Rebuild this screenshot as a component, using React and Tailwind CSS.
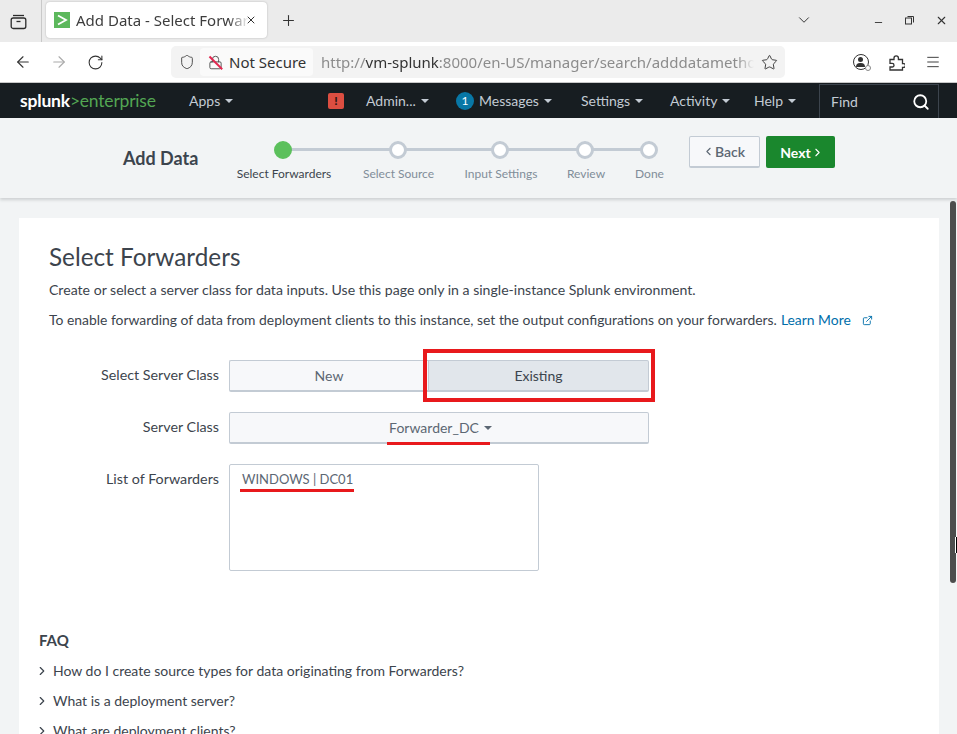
import { ArrowLeft, ArrowRight, RotateCw, Shield, Star, Menu, Plus, X, ChevronDown, ChevronLeft, ChevronRight, Search, Minus, ExternalLink, Lock } from "lucide-react"

const uiFont = "font-['Noto_Sans',sans-serif]"
const pageFont = "font-['Lato','Open_Sans',sans-serif]"

const steps = [
  { label: "Select Forwarders", width: "w-[96px]", active: true },
  { label: "Select Source", width: "w-[73px]" },
  { label: "Input Settings", width: "w-[72px]" },
  { label: "Review", width: "w-[38px]" },
  { label: "Done", width: "w-[29px]" },
]

const faqs = [
  "How do I create source types for data originating from Forwarders?",
  "What is a deployment server?",
  "What are deployment clients?",
]

function Caret() {
  return <span className="ml-[5px] inline-block h-0 w-0 border-x-[4px] border-t-[4px] border-x-transparent border-t-current" />
}

function TabBar() {
  return (
    <div className={`flex h-[42px] shrink-0 items-start bg-[#ebebeb] ${uiFont}`}>
      <div className="flex h-[42px] w-[42px] items-center justify-center border-r border-[#c9c9c9] pr-[4px]">
        <svg width="17" height="17" viewBox="0 0 17 17" fill="none" stroke="#2b2b2b" strokeWidth="1.3">
          <path d="M3 2.5h11" />
          <rect x="1.2" y="5" width="14.6" height="10.5" rx="2" />
          <path d="M6.5 8.5h4" />
        </svg>
      </div>
      <div className="ml-[4px] mt-[2px] flex h-[36px] w-[221px] items-center rounded-[4px] bg-white pl-[8px] shadow-[0_0_2px_rgba(0,0,0,0.25)]">
        <div className="flex h-[16px] w-[16px] items-center justify-center bg-[#5cb85c]">
          <svg width="12" height="12" viewBox="0 0 12 12" fill="none" stroke="white" strokeWidth="1.8">
            <path d="M2 1.5 10 6 2 10.5" />
          </svg>
        </div>
        <span className="ml-[6px] w-[173px] overflow-hidden whitespace-nowrap text-[15px] text-[#3d3d3d] [mask-image:linear-gradient(to_right,black_88%,transparent)]">
          Add Data - Select Forwarders
        </span>
        <X size={12} className="-ml-[4px] text-[#333]" />
      </div>
      <Plus size={17} strokeWidth={1.5} className="ml-[13px] mt-[12px] text-[#333]" />
      <div className="flex-1" />
      <ChevronDown size={18} strokeWidth={1.3} className="mr-[60px] mt-[11px] text-[#333]" />
      <Minus size={11} className="mr-[21px] mt-[17px] text-[#333]" />
      <svg width="9" height="9" viewBox="0 0 9 9" fill="none" stroke="#333" className="mr-[21px] mt-[16px]">
        <rect x="0.5" y="2" width="6" height="6" />
        <path d="M2.5 0.5h6v6" />
      </svg>
      <X size={13} className="mr-[9px] mt-[14px] text-[#333]" />
    </div>
  )
}

function Toolbar() {
  return (
    <div className={`flex h-[41px] shrink-0 items-center border-b border-[#c8c8c8] bg-white ${uiFont}`}>
      <ArrowLeft size={18} strokeWidth={1.5} className="ml-[14px] text-[#333]" />
      <ArrowRight size={18} strokeWidth={1.5} className="ml-[18px] text-[#aaa]" />
      <RotateCw size={17} strokeWidth={1.5} className="ml-[19px] text-[#333]" />
      <div className="ml-[67px] flex h-[32px] w-[614px] items-center rounded-[5px] bg-[#f3f3f3]">
        <Shield size={16} strokeWidth={1.4} className="ml-[8px] text-[#444]" />
        <div className="ml-[5px] flex h-[28px] w-[113px] items-center rounded-[4px] bg-[#fafafa] pl-[8px]">
          <div className="relative">
            <Lock size={15} strokeWidth={1.4} className="text-[#444]" />
            <span className="absolute left-[-1px] top-[7px] h-[1.5px] w-[18px] rotate-45 bg-[#e22850]" />
          </div>
          <span className="ml-[6px] whitespace-nowrap text-[15px] text-[#333]">Not Secure</span>
        </div>
        <span className="ml-[8px] w-[433px] overflow-hidden whitespace-nowrap text-[15px] text-[#8c8c8c] [mask-image:linear-gradient(to_right,black_96%,transparent)]">
          http://<span className="text-[#333]">vm-splunk</span>:8000/en-US/manager/search/adddatamethods
        </span>
        <Star size={17} strokeWidth={1.3} className="ml-[7px] text-[#333]" />
      </div>
      <div className="relative ml-[68px] h-[16px] w-[16px] rounded-full border-[1.5px] border-[#333]">
        <span className="absolute left-[4px] top-[2px] h-[5px] w-[5px] rounded-full bg-[#333]" />
        <span className="absolute left-[2px] top-[8px] h-[4px] w-[9px] rounded-t-full bg-[#333]" />
        <span className="absolute left-[11px] top-[10px] h-[6px] w-[6px] rounded-full border border-[#888] bg-white" />
      </div>
      <svg width="16" height="17" viewBox="0 0 16 17" fill="none" stroke="#333" strokeWidth="1.3" className="ml-[20px]">
        <path d="M1 5.5h4V4a2.2 2.2 0 0 1 4.4 0v1.5h4.1v4.1h1a1.9 1.9 0 0 1 0 3.8h-1V16H1v-3h2.2a1.8 1.8 0 0 0 0-3.6H1z" />
      </svg>
      <Menu size={16} strokeWidth={1.4} className="ml-[20px] text-[#333]" />
    </div>
  )
}

function NavLink({ children, className }) {
  return (
    <div className={`flex items-center text-[14px] text-[#c3cbd4] ${className}`}>
      {children}
      <Caret />
    </div>
  )
}

function SplunkBar() {
  return (
    <div className={`flex h-[35px] shrink-0 items-center bg-[#171d21] ${pageFont}`}>
      <div className="ml-[20px] w-[169px] whitespace-nowrap text-[17.5px] leading-none tracking-[-0.2px]">
        <span className="font-bold text-white">splunk</span>
        <span className="text-[#53a653]">&gt;enterprise</span>
      </div>
      <NavLink className="w-[139px]">Apps</NavLink>
      <div className="flex h-[16px] w-[16px] items-center justify-center rounded-[2px] bg-[#dc4e41] text-[12px] font-black leading-none text-[#2b1512]">!</div>
      <NavLink className="ml-[22px] w-[90px]">Admin...</NavLink>
      <div className="flex h-[18px] w-[18px] items-center justify-center rounded-full bg-[#0877a6] text-[12px] text-white">1</div>
      <NavLink className="ml-[5px] w-[102px]">Messages</NavLink>
      <NavLink className="w-[89px]">Settings</NavLink>
      <NavLink className="w-[84px]">Activity</NavLink>
      <NavLink className="w-[65px]">Help</NavLink>
      <div className="flex h-[34px] w-[120px] items-center justify-between self-end border border-b-0 border-[#3c444d] pl-[11px] pr-[8px] text-[14px] text-[#c3cbd4]">
        Find
        <Search size={18} strokeWidth={2.4} className="text-white" />
      </div>
    </div>
  )
}

function StepHeader() {
  return (
    <div className={`relative flex h-[80px] shrink-0 bg-[#f2f4f5] pl-[123px] shadow-[0_2px_3px_rgba(60,68,77,0.2)] ${pageFont}`}>
      <div className="mt-[30px] w-[113px] whitespace-nowrap text-[18px] font-bold leading-[20px] text-[#3c444d]">Add Data</div>
      <div className="relative mt-[23px] flex h-[45px] gap-[30px]">
        <div className="absolute left-[46px] right-[14px] top-[7px] h-[3px] bg-[#c3cbd4]" />
        {steps.map((step) => (
          <div key={step.label} className={`relative flex flex-col items-center ${step.width}`}>
            <div className={`mr-[2px] h-[18px] w-[18px] rounded-full border-[3px] ${step.active ? "border-[#5cc05c] bg-[#5cc05c]" : "border-[#c3cbd4] bg-white"}`} />
            <div className={`mt-[8px] whitespace-nowrap text-[12px] leading-[14px] ${step.active ? "text-[#3c444d]" : "text-[#818d99]"}`}>{step.label}</div>
          </div>
        ))}
      </div>
      <button className="ml-[25px] mt-[18px] flex h-[32px] w-[71px] items-center justify-center rounded-[2px] border border-b-2 border-[#c3cbd4] bg-[#f7f8fa] pr-[2px] text-[14px] font-semibold text-[#5c6773]">
        <ChevronLeft size={13} strokeWidth={2} />
        Back
      </button>
      <button className="ml-[6px] mt-[18px] flex h-[32px] w-[69px] items-center justify-center rounded-[2px] bg-[#1a872d] pl-[3px] text-[14px] font-bold text-white">
        Next
        <ChevronRight size={13} strokeWidth={2} />
      </button>
    </div>
  )
}

function FormRow({ label, className, children }) {
  return (
    <div className={`flex pl-[30px] ${className}`}>
      <div className="w-[180px] pr-[10px] pt-[6px] text-right text-[14.3px] leading-[16px] text-[#3c444d]">{label}</div>
      {children}
    </div>
  )
}

function Card() {
  return (
    <div className={`mx-[19px] mt-[20px] w-[920px] shrink-0 bg-white pl-[20px] ${pageFont}`}>
      <div className="pl-[10px] pt-[24px]">
        <h1 className="text-[24.3px] leading-[30px] text-[#3c444d]">Select Forwarders</h1>
        <p className="mt-[9px] text-[14.1px] leading-[18px] text-[#3c444d]">
          Create or select a server class for data inputs. Use this page only in a single-instance Splunk environment.
        </p>
        <p className="mt-[12px] flex items-center text-[13.9px] leading-[18px] text-[#3c444d]">
          To enable forwarding of data from deployment clients to this instance, set the output configurations on your forwarders.
          <span className="ml-[4px] text-[#006eaa]">Learn More</span>
          <ExternalLink size={11} className="ml-[11px] text-[#006eaa]" />
        </p>
      </div>
      <div className="-ml-[20px] mt-[32px]">
        <FormRow label="Select Server Class">
          <div className="relative -mt-[1px] flex h-[32px] w-[420px] text-[14px]">
            <div className="flex w-[199px] items-center justify-center rounded-l-[2px] border border-b-2 border-r-0 border-[#c3cbd4] bg-[#f7f8fa] text-[#5c6773]">New</div>
            <div className="flex flex-1 items-center justify-center rounded-r-[2px] border border-b-2 border-[#c3cbd4] bg-[#e1e6eb] text-[#3c444d]">Existing</div>
            <div className="absolute left-[194px] top-[-11px] h-[53px] w-[232px] border-[4px] border-[#e8191c]" />
          </div>
        </FormRow>
        <FormRow label="Server Class" className="mt-[21px]">
          <div className="relative -mt-[1px] flex h-[32px] w-[420px] items-center justify-center rounded-[2px] border border-b-2 border-[#c3cbd4] bg-[#f7f8fa] pl-[3px] text-[14px] text-[#5c6773]">
            Forwarder_DC
            <Caret />
            <div className="absolute left-[157px] top-[29px] h-[3px] w-[103px] bg-[#e8191c]" />
          </div>
        </FormRow>
        <FormRow label="List of Forwarders" className="mt-[21px]">
          <div className="relative -mt-[1px] h-[107px] w-[310px] rounded-[2px] border border-[#c3cbd4] bg-white pl-[12px] pt-[6px] text-[13px] leading-[17px] text-[#5c6773]">
            WINDOWS | DC01
            <div className="absolute left-[10px] top-[24px] h-[3px] w-[114px] bg-[#e8191c]" />
          </div>
        </FormRow>
      </div>
      <div className="mt-[59px] h-[200px]">
        <h2 className="text-[15px] font-bold leading-[20px] text-[#3c444d]">FAQ</h2>
        <ul className="mt-[12px] flex flex-col gap-[12px]">
          {faqs.map((faq) => (
            <li key={faq} className="flex items-center text-[14px] leading-[18px] text-[#3c444d]">
              <ChevronRight size={14} strokeWidth={2} className="-ml-[4px] mr-[4px]" />
              {faq}
            </li>
          ))}
        </ul>
      </div>
    </div>
  )
}

export default function App() {
  return (
    <div className="relative flex h-[734px] w-[957px] flex-col overflow-hidden bg-[#f2f4f5]">
      <TabBar />
      <Toolbar />
      <SplunkBar />
      <StepHeader />
      <Card />
      {/* overlay scrollbar and the mouse pointer on top of it */}
      <div className="absolute left-[950px] top-[201px] h-[382px] w-[6px] rounded-full bg-[#4d4d4d]" />
      <div className="absolute left-[955px] top-[537px] h-[16px] w-[2px] border-l border-white bg-black" />
    </div>
  )
}
